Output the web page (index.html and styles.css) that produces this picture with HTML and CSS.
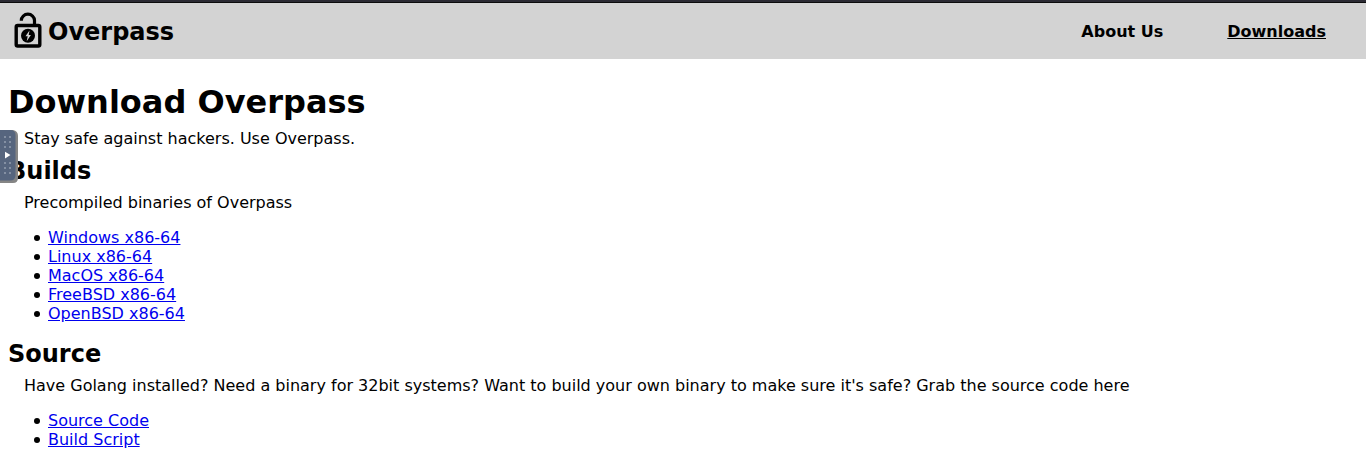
FILE: index.html
```html
<!DOCTYPE html>
<html lang="en">
<head>
<meta charset="utf-8">
<title>Overpass</title>
<link rel="stylesheet" href="styles.css">
</head>
<body>
<nav class="nav">
  <div class="brand">
    <svg class="logo" viewBox="8 11 40 40" aria-hidden="true">
      <path d="M21.300 20.800v-.3a6.600 6.300 0 0 1 13.200 0V25" fill="none" stroke="#000" stroke-width="3.200"/>
      <rect x="16.200" y="25.500" width="23.600" height="20.500" rx="1.500" fill="none" stroke="#000" stroke-width="3.400"/>
      <circle cx="28" cy="35.800" r="7" fill="#000"/>
      <path d="M29.500 30.500l-4 5.800h2.200l-1 5 4.200-6.300h-2.200z" fill="#d3d3d3"/>
    </svg>
    <span class="brand-name">Overpass</span>
  </div>
  <div class="links"><a class="nav-link" href="#">About Us</a><a class="nav-link current" href="#">Downloads</a></div>
</nav>
<main class="content">
  <h1 class="title">Download Overpass</h1>
  <p class="text">Stay safe against hackers. Use Overpass.</p>
  <h2 class="subtitle">Builds</h2>
  <p class="text">Precompiled binaries of Overpass</p>
  <ul class="list">
    <li class="item"><a href="#">Windows x86-64</a></li>
    <li class="item"><a href="#">Linux x86-64</a></li>
    <li class="item"><a href="#">MacOS x86-64</a></li>
    <li class="item"><a href="#">FreeBSD x86-64</a></li>
    <li class="item"><a href="#">OpenBSD x86-64</a></li>
  </ul>
  <h2 class="subtitle">Source</h2>
  <p class="text">Have Golang installed? Need a binary for 32bit systems? Want to build your own binary to make sure it's safe? Grab the source code here</p>
  <ul class="list">
    <li class="item"><a href="#">Source Code</a></li>
    <li class="item"><a href="#">Build Script</a></li>
  </ul>
</main>
<svg class="handle" viewBox="0 129 20 56" aria-hidden="true">
  <path d="M0 130h13q5 1 5 6v42q0 5-5 5H0z" fill="#858585"/>
  <path d="M0 130h10q5.500 0 5.500 5v40q0 5.500-5.500 5.500H0z" fill="#56657e"/>
  <path d="M4 137h2m3 0h2M4 142h2m3 0h2M4 147h2m3 0h2M4 163h2m3 0h2M4 168h2m3 0h2M4 173h2m3 0h2" stroke="#8490a3" stroke-width="2"/>
  <path d="M5 151.700l5.500 3.400-5.500 3.400z" fill="#fff"/>
</svg>
</body>
</html>
```
FILE: styles.css
```css
body { margin: 0; height: 454px; overflow: hidden; background: #fff; color: #000; font: 16px/19px "DejaVu Sans", sans-serif; }
.nav { box-sizing: border-box; height: 59px; padding: 3px 40px 0 8px; background: linear-gradient(#2b2a33 2px, #0c0c0d 2px, #0c0c0d 3px, #d3d3d3 3px); display: flex; align-items: center; justify-content: space-between; }
.brand { display: flex; align-items: center; }
.logo { width: 40px; height: 40px; }
.brand-name { padding-top: 2px; font-size: 24px; line-height: 28px; font-weight: bold; }
.links { display: flex; gap: 64px; font-weight: bold; }
.nav-link { color: #000; text-decoration: none; }
.current { text-decoration: underline; }
.content { padding: 24px 8px 0; }
.title { margin: 0; font-size: 32px; line-height: 38px; }
.subtitle { margin: 8px 0; padding-top: 1px; font-size: 24px; line-height: 28px; }
.text { margin: 8px 16px; }
.list { margin: 16px 0; padding-left: 26px; list-style: none; }
.item { display: flex; align-items: center; gap: 8px; }
.item::before { content: ""; width: 6px; height: 6px; margin-top: 1px; border-radius: 50%; background: #000; }
a { color: #00e; }
.handle { position: absolute; left: 0; top: 129px; width: 20px; height: 56px; }
```
